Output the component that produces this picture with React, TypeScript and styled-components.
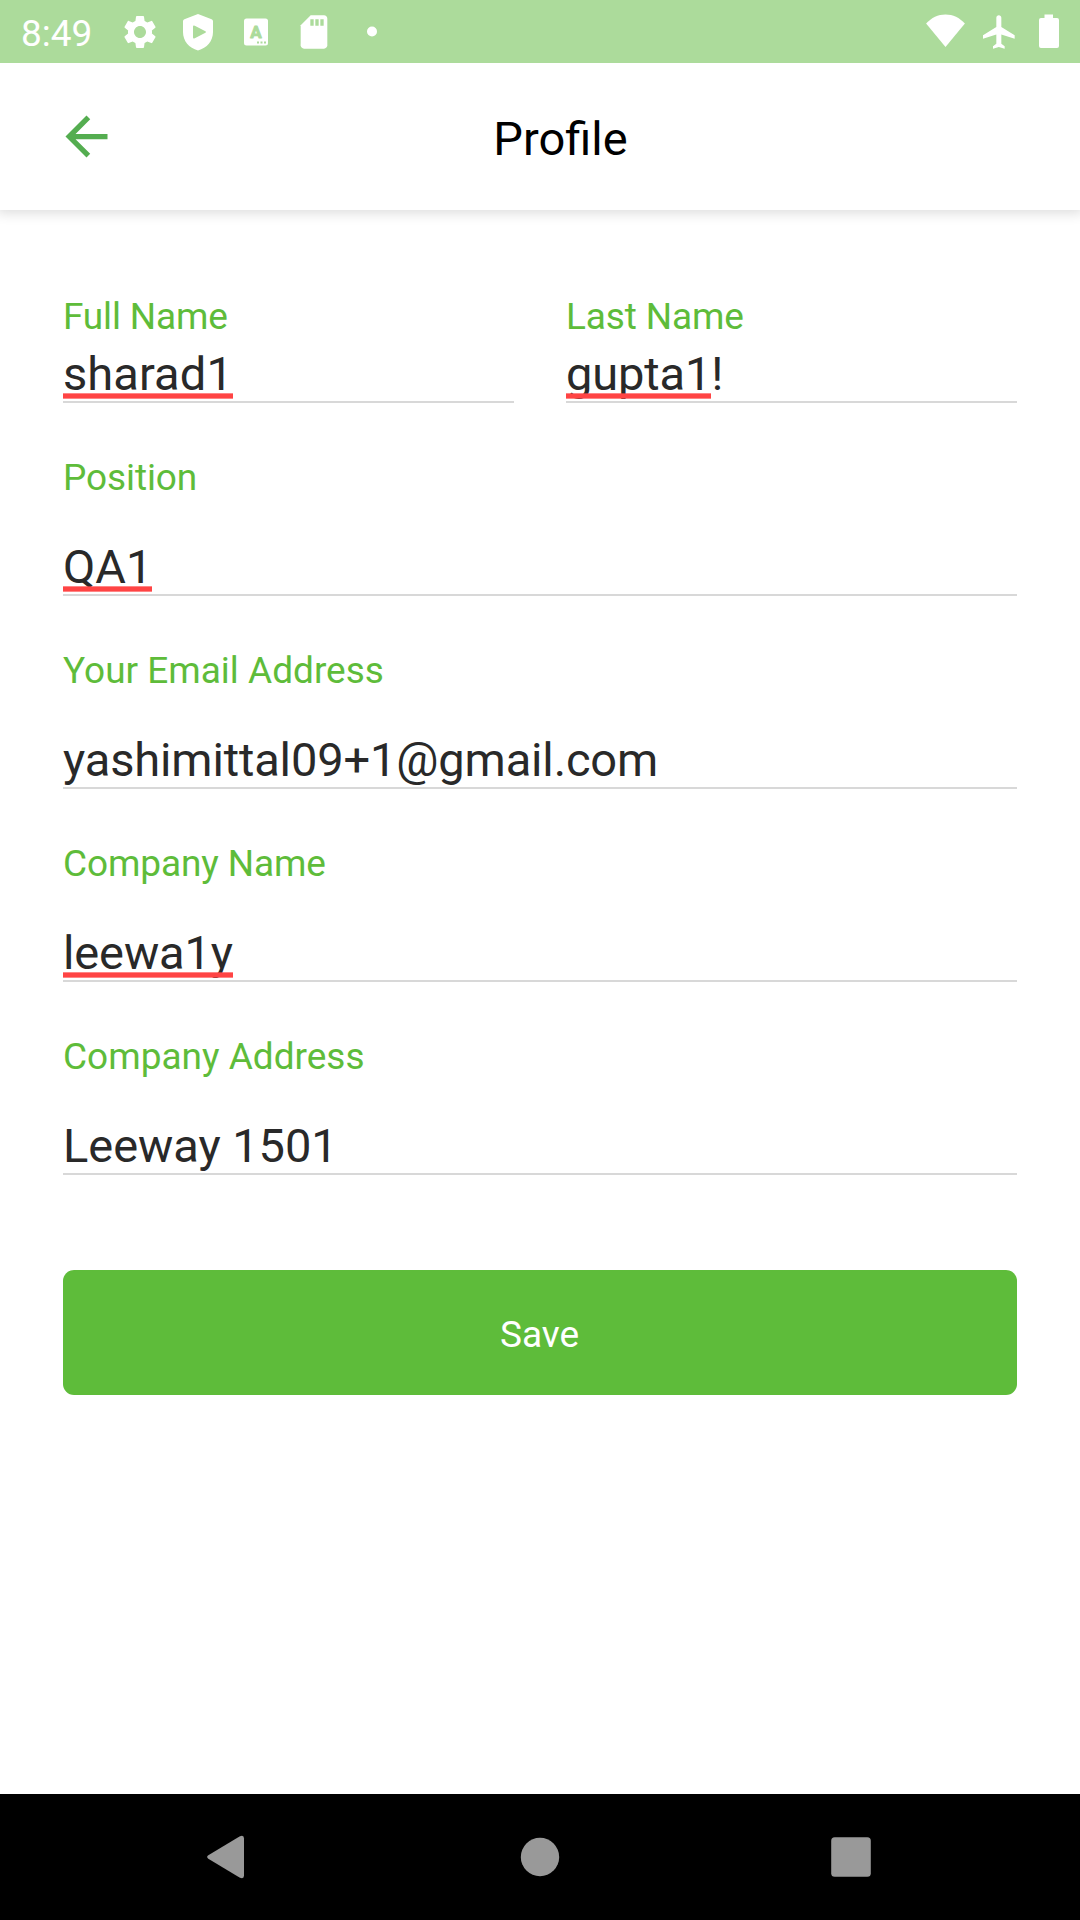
import React from "react";
import styled, { createGlobalStyle } from "styled-components";
import { MdArrowBack, MdSettings } from "react-icons/md";

const GlobalStyle = createGlobalStyle`
  html, body { margin: 0; padding: 0; background: #fff; }
  *, *::after { box-sizing: border-box; }
`;

const Screen = styled.div`
  width: 1080px;
  height: 1920px;
  display: flex;
  flex-direction: column;
  overflow: hidden;
  background: #fff;
  font-family: Roboto, "Noto Sans", sans-serif;
`;

const StatusBar = styled.div`
  height: 63px;
  flex: none;
  display: flex;
  align-items: center;
  justify-content: space-between;
  padding: 0 11px 0 21px;
  background: #acdb9b;
  color: #fff;
  position: relative;
  z-index: 2;
`;

const StatusGroup = styled.div<{ $gap: number }>`
  display: flex;
  align-items: center;
  gap: ${(p) => p.$gap}px;
`;

const Clock = styled.span`
  width: 81px;
  padding-top: 4px;
  font-size: 37px;
  line-height: 59px;
  white-space: nowrap;
`;

const Glyph = styled.svg`
  display: block;
  flex: none;
  fill: currentColor;
`;

const IconLetter = styled.text`
  font-family: Roboto, sans-serif;
  font-size: 17px;
  font-weight: 700;
`;

const Header = styled.header`
  height: 147px;
  flex: none;
  display: grid;
  grid-template-columns: 126px 869px 1fr;
  align-items: center;
  background: #fff;
  box-shadow: 0 0 12px 3px rgba(0, 0, 0, 0.14);
`;

const BackButton = styled.button`
  display: flex;
  width: 63px;
  height: 63px;
  margin: 0 0 0 55px;
  padding: 0;
  border: 0;
  background: none;
  color: #54ad50;
`;

const Title = styled.h1`
  margin: 4px 0 0;
  font-size: 47px;
  font-weight: 400;
  line-height: 55px;
  text-align: center;
  color: #000;
`;

const Form = styled.form`
  flex: 1;
  display: flex;
  flex-direction: column;
  gap: 53px;
  padding: 85px 63px 0;
`;

const NameRow = styled.div`
  display: grid;
  grid-template-columns: 1fr 1fr;
  gap: 52px;
`;

const FieldBox = styled.div<{ $gap: number }>`
  display: flex;
  flex-direction: column;
  gap: ${(p) => p.$gap}px;
  border-bottom: 2px solid #d8d8d8;
`;

const Label = styled.label<{ $tracking: number }>`
  font-size: 37px;
  line-height: 43px;
  letter-spacing: ${(p) => p.$tracking}px;
  color: #5ebc3a;
`;

const Value = styled.div<{ $tracking: number }>`
  font-size: 47px;
  line-height: 55px;
  letter-spacing: ${(p) => p.$tracking}px;
  color: #292929;
  white-space: pre;
`;

const Misspelled = styled.span`
  position: relative;

  &::after {
    content: "";
    position: absolute;
    left: 0;
    right: 0;
    bottom: 2px;
    height: 6px;
    background: #ff4444;
    background-clip: padding-box;
    border: solid rgba(255, 68, 68, 0.65);
    border-width: 1px 0;
  }
`;

const SaveButton = styled.button`
  height: 125px;
  margin: 42px 0 0;
  padding: 4px 1px 0 0;
  border: 0;
  border-radius: 11px;
  background: #5ebc3a;
  color: #fff;
  font-family: inherit;
  font-size: 37px;
  line-height: 43px;
`;

const NavBar = styled.nav`
  height: 126px;
  flex: none;
  display: flex;
  align-items: center;
  gap: 267px;
  padding-left: 207px;
  background: #000;
  color: #999;
`;

type FieldProps = {
  label: string;
  flagged?: string;
  text?: string;
  gap?: number;
  labelTracking?: number;
  valueTracking?: number;
};

function Field({ label, flagged, text = "", gap = 40, labelTracking = 0, valueTracking = 0 }: FieldProps) {
  return (
    <FieldBox $gap={gap}>
      <Label $tracking={labelTracking}>{label}</Label>
      <Value $tracking={valueTracking}>
        {flagged && <Misspelled>{flagged}</Misspelled>}
        {text}
      </Value>
    </FieldBox>
  );
}

function StatusIcons() {
  return (
    <StatusGroup $gap={18}>
      <MdSettings size={40} />
      <Glyph width="40" height="40" viewBox="0 0 40 40">
        <path
          fillRule="evenodd"
          d="M20 2 33.6 7.2Q35 7.8 35 9.2V20C35 29 29 36 20 38.4 11 36 5 29 5 20V9.2Q5 7.8 6.4 7.2ZM15 14.8V25.2Q15 27.2 16.8 26.2L27.4 20.8Q28.8 20 27.4 19.2L16.8 13.8Q15 12.8 15 14.8Z"
        />
      </Glyph>
      <Glyph width="40" height="40" viewBox="0 0 40 40">
        <rect x="8" y="6.5" width="24" height="27" rx="2.5" />
        <IconLetter x="20" y="25.5" textAnchor="middle" fill="#acdb9b" stroke="#acdb9b" strokeWidth="0.9" strokeLinejoin="round">
          A
        </IconLetter>
        <path fill="#acdb9b" d="M21 29.500h2v2h-2zM24.500 29.500h2v2h-2zM28 29.500h2v2h-2z" />
      </Glyph>
      <Glyph width="40" height="40" viewBox="0 0 24 24">
        <path d="M18 2h-8L4.02 8 4 20c0 1.1.9 2 2 2h12c1.1 0 2-.9 2-2V4c0-1.1-.9-2-2-2z" />
        <path fill="#acdb9b" d="M9.8 4.3h2v4h-2zM12.8 4.3h2v4h-2zM15.8 4.3h2v4h-2z" />
      </Glyph>
      <Glyph width="40" height="40" viewBox="0 0 40 40">
        <circle cx="20" cy="19.5" r="5" />
      </Glyph>
    </StatusGroup>
  );
}

export default function App() {
  return (
    <Screen>
      <GlobalStyle />
      <StatusBar>
        <StatusGroup $gap={18}>
          <Clock>8:49</Clock>
          <StatusIcons />
        </StatusGroup>
        <StatusGroup $gap={14}>
          <Glyph width="40" height="40" viewBox="-0.5 0 40 40">
            <path d="M20 35 .6 11.6C6 5.500 12.500 2.400 20 2.400S34 5.500 39.400 11.600Z" />
          </Glyph>
          <Glyph width="40" height="40" viewBox="0 0 24 24">
            <path d="M21.400 16v-2l-8-5V3.500c0-.83-.67-1.500-1.500-1.500s-1.500.67-1.500 1.500V9l-8 5v2l8-2.500V19l-2 1.500V22l3.500-1 3.500 1v-1.500l-2-1.500v-5.500z" />
          </Glyph>
          <Glyph width="36" height="40" viewBox="4 0 36 40">
            <path d="M15.500 2.500h8.500v3.500h4q2 0 2 2v26q0 2-2 2H12q-2 0-2-2V8q0-2 2-2h3.500z" />
          </Glyph>
        </StatusGroup>
      </StatusBar>

      <Header>
        <BackButton aria-label="Back">
          <MdArrowBack size={63} />
        </BackButton>
        <Title>Profile</Title>
      </Header>

      <Form>
        <NameRow>
          <Field label="Full Name" flagged="sharad1" gap={8} labelTracking={-0.18} valueTracking={0.1} />
          <Field label="Last Name" flagged="gupta1" text="!" gap={8} labelTracking={-0.15} valueTracking={-0.15} />
        </NameRow>
        <Field label="Position" flagged="QA1" labelTracking={-0.1} />
        <Field label="Your Email Address" text="yashimittal09+1@gmail.com" valueTracking={-0.14} />
        <Field label="Company Name" flagged="leewa1y" labelTracking={-0.12} valueTracking={-0.12} />
        <Field label="Company Address" text="Leeway 1501" valueTracking={-0.05} />
        <SaveButton type="button">Save</SaveButton>
      </Form>

      <NavBar>
        <Glyph width="44" height="44" viewBox="0 0 44 44">
          <path d="M1.300 20.300Q-1 22 1.300 23.700L32.500 42.500Q37 44.500 37 40.500V3.500Q37-.5 32.500 1.500Z" />
        </Glyph>
        <Glyph width="44" height="44" viewBox="0 0 44 44">
          <circle cx="22" cy="22" r="19.200" />
        </Glyph>
        <Glyph width="44" height="44" viewBox="0 0 44 44">
          <rect x="2.200" y="2.200" width="39.600" height="39.600" rx="3.500" />
        </Glyph>
      </NavBar>
    </Screen>
  );
}
